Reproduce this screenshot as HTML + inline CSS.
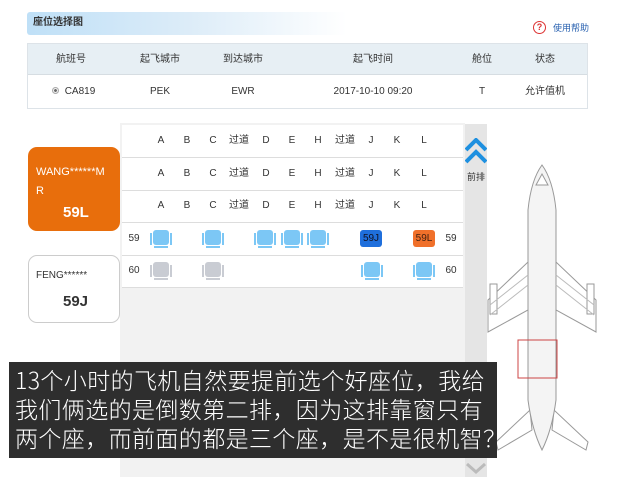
<!DOCTYPE html>
<html><head><meta charset="utf-8"><style>
*{margin:0;padding:0;box-sizing:border-box}
body{width:620px;height:477px;background:#fff;position:relative;overflow:hidden;font-family:"Liberation Sans","Noto Sans CJK SC",sans-serif;color:#333}
.a{position:absolute}
.t{font-size:10px;line-height:12px;height:12px;text-align:center;transform:translateX(-50%);white-space:nowrap}
.seat{position:absolute;width:22px;height:18px;transform:translateX(-50%)}
.seat .b{position:absolute;left:3px;right:3px;top:0;bottom:3px;border-radius:3px;background:#7cc7f5}
.seat .l,.seat .r{position:absolute;top:3px;width:2px;height:12px;background:#7cc7f5}
.seat .l{left:0}.seat .r{right:0}
.seat .f{position:absolute;left:4px;right:4px;bottom:0;height:2px;background:#7cc7f5}
.g .b,.g .l,.g .r,.g .f{background:#c9ccd3}
.lab{position:absolute;width:22px;height:17px;transform:translateX(-50%);border-radius:3px;font-size:10px;text-align:center;line-height:17px}
</style></head><body>
<div class="a" style="left:27px;top:12px;width:320px;height:23px;border-radius:3px 0 0 3px;background:linear-gradient(90deg,#bfe0f7,#dcecf8 50%,#fff)"></div>
<div class="a" style="left:33px;top:17px;font-size:10px;line-height:12px;font-weight:bold;color:#333">座位选择图</div>
<div class="a" style="left:533px;top:21px;width:13px;height:13px;border:1.5px solid #d33;border-radius:50%;font-size:9px;color:#d33;text-align:center;line-height:10px;font-weight:bold">?</div>
<div class="a" style="left:553px;top:22px;font-size:9px;line-height:12px;color:#2a62b0">使用帮助</div>
<div class="a" style="left:27px;top:43px;width:561px;height:66px;border:1px solid #dde3e8"></div>
<div class="a" style="left:28px;top:44px;width:559px;height:31px;background:#e7eff4;border-bottom:1px solid #d6dde2"></div>
<div class="a t" style="left:71px;top:54px">航班号</div>
<div class="a t" style="left:160px;top:54px">起飞城市</div>
<div class="a t" style="left:243px;top:54px">到达城市</div>
<div class="a t" style="left:373px;top:54px">起飞时间</div>
<div class="a t" style="left:482px;top:54px">舱位</div>
<div class="a t" style="left:545px;top:54px">状态</div>
<div class="a" style="left:52px;top:87px;width:7px;height:7px;border-radius:50%;border:1px solid #aaa;background:radial-gradient(#666 35%,#eee 45%)"></div>
<div class="a t" style="left:80px;top:86px">CA819</div>
<div class="a t" style="left:160px;top:86px">PEK</div>
<div class="a t" style="left:243px;top:86px">EWR</div>
<div class="a t" style="left:373px;top:86px">2017-10-10 09:20</div>
<div class="a t" style="left:482px;top:86px">T</div>
<div class="a t" style="left:545px;top:86px">允许值机</div>

<div class="a" style="left:120px;top:123px;width:345px;height:354px;background:#f2f2f2"></div>
<div class="a" style="left:465px;top:124px;width:22px;height:353px;background:#e5e5e5"></div>
<svg class="a" style="left:465px;top:138px" width="22" height="28"><path d="M1 12 L11 2 L21 12 M1 24 L11 14 L21 24" stroke="#1e90e0" stroke-width="4" fill="none"/></svg>
<div class="a" style="left:467px;top:172px;font-size:9px;line-height:11px">前排</div>
<svg class="a" style="left:465px;top:462px" width="22" height="15"><path d="M2 2 L11 10 L20 2" stroke="#bbb" stroke-width="3" fill="none"/></svg>

<div class="a" style="left:122px;top:125px;width:341px;height:163px;background:#fff"></div>
<div class="a" style="left:122px;top:157px;width:341px;height:1px;background:#ddd"></div>
<div class="a" style="left:122px;top:190px;width:341px;height:1px;background:#ddd"></div>
<div class="a" style="left:122px;top:222px;width:341px;height:1px;background:#ddd"></div>
<div class="a" style="left:122px;top:255px;width:341px;height:1px;background:#ddd"></div>
<div class="a" style="left:122px;top:287px;width:341px;height:1px;background:#ddd"></div>

<div id="hdr"></div>
<script>
var xs=[161,187,213,239,266,292,318,345,371,397,424],ls=["A","B","C","过道","D","E","H","过道","J","K","L"],h="";
[135,168,200].forEach(function(y){xs.forEach(function(x,i){h+='<div class="a t" style="left:'+x+'px;top:'+y+'px">'+ls[i]+'</div>'})});
function s(x,y,g){return '<div class="seat'+(g?' g':'')+'" style="left:'+x+'px;top:'+y+'px"><div class="b"></div><div class="l"></div><div class="r"></div><div class="f"></div></div>'}
[161,213,265,292,318].forEach(function(x){h+=s(x,230)});
h+=s(161,262,1)+s(213,262,1)+s(372,262)+s(424,262);
h+='<div class="lab" style="left:371px;top:230px;background:#1f6fdc;color:#112">59J</div>';
h+='<div class="lab" style="left:424px;top:230px;background:#f0702a;color:#421">59L</div>';
h+='<div class="a t" style="left:134px;top:233px">59</div><div class="a t" style="left:451px;top:233px">59</div>';
h+='<div class="a t" style="left:134px;top:265px">60</div><div class="a t" style="left:451px;top:265px">60</div>';
document.getElementById("hdr").innerHTML=h;
</script>

<div class="a" style="left:28px;top:147px;width:92px;height:84px;border-radius:9px;background:#e86e0c;color:#fff">
<div style="position:absolute;left:8px;top:16px;font-size:11px;line-height:19px;width:76px;word-break:break-all">WANG******MR</div>
<div style="position:absolute;left:35px;top:57px;font-size:15px;font-weight:bold">59L</div></div>
<div class="a" style="left:28px;top:255px;width:92px;height:68px;border-radius:9px;border:1px solid #ccc;background:#fff">
<div style="position:absolute;left:7px;top:14px;font-size:10px">FENG******</div>
<div style="position:absolute;left:34px;top:37px;font-size:15px;font-weight:bold">59J</div></div>

<svg class="a" style="left:486px;top:160px" width="112" height="300" viewBox="0 0 112 300">
<g fill="#fff" stroke="#999" stroke-width="1">
<path d="M2 140 L42 102 L42 150 L2 172 Z"/><path d="M110 140 L70 102 L70 150 L110 172 Z"/>
<path d="M4 124 h7 v30 h-7 z"/><path d="M101 124 h7 v30 h-7 z"/>
<path d="M10 282 L44 250 L46 270 L12 290Z"/><path d="M102 282 L68 250 L66 270 L100 290Z"/>
<path d="M56 5 Q45 20 42 50 L42 240 Q46 270 56 290 Q66 270 70 240 L70 50 Q67 20 56 5Z" fill="#f4f4f4"/>
<path d="M50 25 L56 14 L62 25 Z"/>
</g>
<g stroke="#bbb" fill="none"><path d="M4 145 L42 115 M4 155 L42 125 M108 145 L70 115 M108 155 L70 125"/></g>
<rect x="32" y="180" width="39" height="38" fill="none" stroke="#c44" stroke-width="1"/>
</svg>

<div class="a" style="left:9px;top:362px;width:488px;height:96px;background:#2e2e2e;color:#fff;font-family:'Noto Sans CJK SC','WenQuanYi Zen Hei',sans-serif;font-size:23px;line-height:29px;padding:3px 0 0 6px;letter-spacing:0.4px;white-space:nowrap;font-weight:300">13个小时的飞机自然要提前选个好座位，我给<br>我们俩选的是倒数第二排，因为这排靠窗只有<br>两个座，而前面的都是三个座，是不是很机智？</div>
</body></html>
